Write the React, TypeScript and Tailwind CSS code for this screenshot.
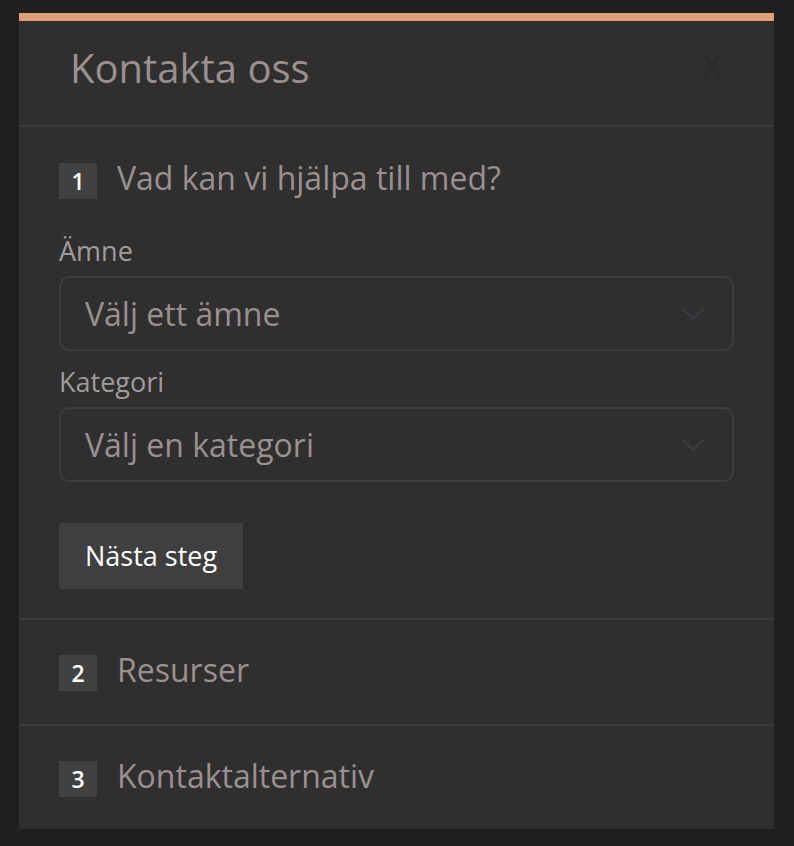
function Step({ n, title }: { n: number; title: string }) {
  return (
    <div className="flex items-start gap-5">
      <span className="flex h-9 w-[38px] shrink-0 items-center justify-center bg-[#414141] text-[23px] font-semibold text-white">
        {n}
      </span>
      <span className="-mt-[3px] text-[32px] leading-[36px] text-[#9a9090]">{title}</span>
    </div>
  );
}

function Chevron() {
  return (
    <svg
      className="h-3 w-[22px] text-[#3a3e44]"
      viewBox="0 0 22 12"
      fill="none"
      stroke="currentColor"
      strokeWidth="2"
      strokeLinecap="round"
      strokeLinejoin="round"
      aria-hidden="true"
    >
      <path d="M1 1.5 11 10.5 21 1.5" />
    </svg>
  );
}

function Select({ placeholder }: { placeholder: string }) {
  return (
    <div className="flex h-[75px] items-center justify-between rounded-[10px] border-2 border-[#3d3d3d] pl-6 pr-7">
      <span className="text-[32px] text-[#9a9090]">{placeholder}</span>
      <Chevron />
    </div>
  );
}

export default function App() {
  return (
    <div
      className="min-h-[846px] bg-[#202020] pb-[17px] pl-[19px] pr-[20px] pt-[13px]"
      style={{ fontFamily: '"Open Sans", sans-serif' }}
    >
      <div className="border-t-8 border-[#e0a073] bg-[#2f2f2f]">
        <div className="flex h-[104px] items-start justify-between pl-[51px] pr-[53px] pt-5">
          <h1 className="text-[40px] leading-[54px] text-[#9a9090]">Kontakta oss</h1>
          <button className="mt-1 text-[31px] leading-[42px] text-[#28292c]">X</button>
        </div>

        <div className="border-t-2 border-[#3b3b3b] px-10 pb-[29px] pt-9">
          <Step n={1} title="Vad kan vi hjälpa till med?" />
          <label className="mb-[6px] mt-[33px] block h-[38px] text-[27px] leading-[38px] text-[#a19b9b]">
            Ämne
          </label>
          <Select placeholder="Välj ett ämne" />
          <label className="mb-[6px] mt-3 block h-[38px] text-[27px] leading-[38px] text-[#a19b9b]">
            Kategori
          </label>
          <Select placeholder="Välj en kategori" />
          <button className="mt-[41px] h-[66px] bg-[#3f3f3f] px-[26px] text-[27px] text-white">
            Nästa steg
          </button>
        </div>

        <div className="border-t-2 border-[#3b3b3b] px-10 pb-[33px] pt-[35px]">
          <Step n={2} title="Resurser" />
        </div>
        <div className="border-t-2 border-[#3b3b3b] px-10 pb-8 pt-[35px]">
          <Step n={3} title="Kontaktalternativ" />
        </div>
      </div>
    </div>
  );
}
